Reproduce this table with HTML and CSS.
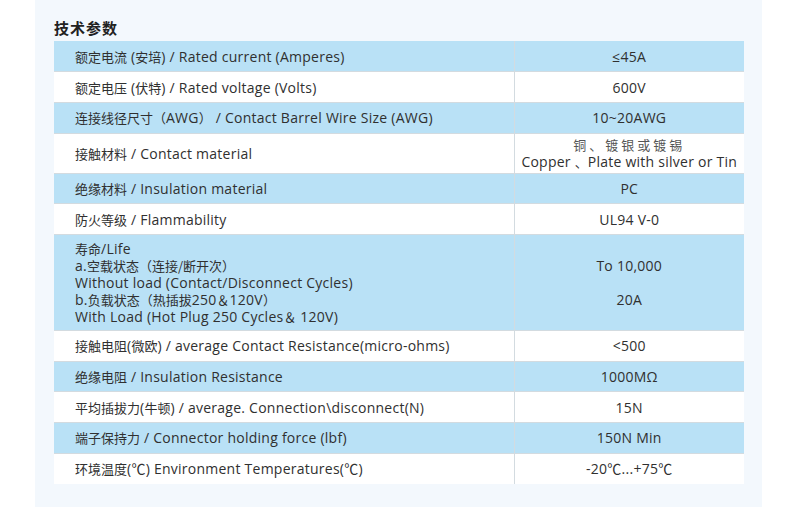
FILE: index.html
```html
<!DOCTYPE html>
<html lang="zh-CN">
<head>
<meta charset="utf-8">
<title>技术参数</title>
<link rel="stylesheet" href="styles.css">
</head>
<body>
<div class="panel">
  <h2 class="title">技术参数</h2>
  <table class="spec">
    <tr><td class="k"><span class="zh">额定电流</span> (<span class="zh">安培</span>) / Rated current (Amperes)</td><td class="v">≤45A</td></tr>
    <tr><td class="k"><span class="zh">额定电压</span> (<span class="zh">伏特</span>) / Rated voltage (Volts)</td><td class="v">600V</td></tr>
    <tr><td class="k"><span class="zh">连接线径尺寸（</span>AWG<span class="zh">）</span> / Contact Barrel Wire Size (AWG)</td><td class="v">10~20AWG</td></tr>
    <tr class="two"><td class="k"><span class="zh">接触材料</span> / Contact material</td><td class="v"><span class="small">铜、镀银或镀锡</span><br>Copper <span class="zh">、</span>Plate with silver or Tin</td></tr>
    <tr><td class="k"><span class="zh">绝缘材料</span> / Insulation material</td><td class="v">PC</td></tr>
    <tr><td class="k"><span class="zh">防火等级</span> / Flammability</td><td class="v">UL94 V-0</td></tr>
    <tr class="life"><td class="k"><span class="zh">寿命</span>/Life<br>a.<span class="zh">空载状态（连接/断开次）</span><br>Without load (Contact/Disconnect Cycles)<br>b.<span class="zh">负载状态（热插拔</span>250<span class="zh">＆</span>120V<span class="zh">）</span><br>With Load (Hot Plug 250 Cycles<span class="zh">＆</span> 120V)</td><td class="v">To 10,000<br><br>20A</td></tr>
    <tr><td class="k"><span class="zh">接触电阻</span>(<span class="zh">微欧</span>) / average Contact Resistance(micro-ohms)</td><td class="v">&lt;500</td></tr>
    <tr><td class="k"><span class="zh">绝缘电阻</span> / Insulation Resistance</td><td class="v">1000MΩ</td></tr>
    <tr><td class="k"><span class="zh">平均插拔力</span>(<span class="zh">牛顿</span>) / average. Connection\disconnect(N)</td><td class="v">15N</td></tr>
    <tr><td class="k"><span class="zh">端子保持力</span> / Connector holding force (lbf)</td><td class="v">150N Min</td></tr>
    <tr><td class="k"><span class="zh">环境温度</span>(℃) Environment Temperatures(℃)</td><td class="v">-20℃...+75℃</td></tr>
  </table>
</div>
</body>
</html>
```

FILE: styles.css
```css
html, body {
  margin: 0;
  padding: 0;
  background: #ffffff;
}
body {
  font-family: "Open Sans", "Noto Sans CJK SC", sans-serif;
  color: #303030;
}
.panel {
  margin-left: 35px;
  width: 727px;
  box-sizing: border-box;
  background: #f3f8fd;
  padding: 17px 18px 23px 19px;
}
.title {
  margin: 0 0 3px 0;
  font-family: "Noto Sans CJK SC", sans-serif;
  font-size: 15px;
  line-height: 21px;
  font-weight: 700;
  color: #222222;
  letter-spacing: 1px;
}
.spec {
  width: 690px;
  border-collapse: collapse;
  font-size: 14px;
  letter-spacing: 0.25px;
  line-height: 17px;
  background: #ffffff;
}
.spec tr:nth-child(odd) {
  background: #b9e1f6;
}
.spec td {
  height: 30.7px;
  box-sizing: border-box;
  padding: 2px 0;
  border-bottom: 1px solid #d3dbe0;
  vertical-align: middle;
  white-space: nowrap;
}
.spec tr:last-child td {
  border-bottom: none;
}
.spec .k {
  width: 460px;
  padding-left: 21px;
  border-right: 1px solid #d3dbe0;
}
.spec .v {
  text-align: center;
}
.spec .two td {
  height: 40px;
}
.spec .life td {
  height: 96px;
}
.zh {
  font-family: "Noto Sans CJK SC", sans-serif;
  font-size: 13px;
  letter-spacing: 0;
}
.small {
  font-family: "Noto Sans CJK SC", sans-serif;
  font-size: 13px;
  letter-spacing: 3px;
  color: #555555;
}
```
